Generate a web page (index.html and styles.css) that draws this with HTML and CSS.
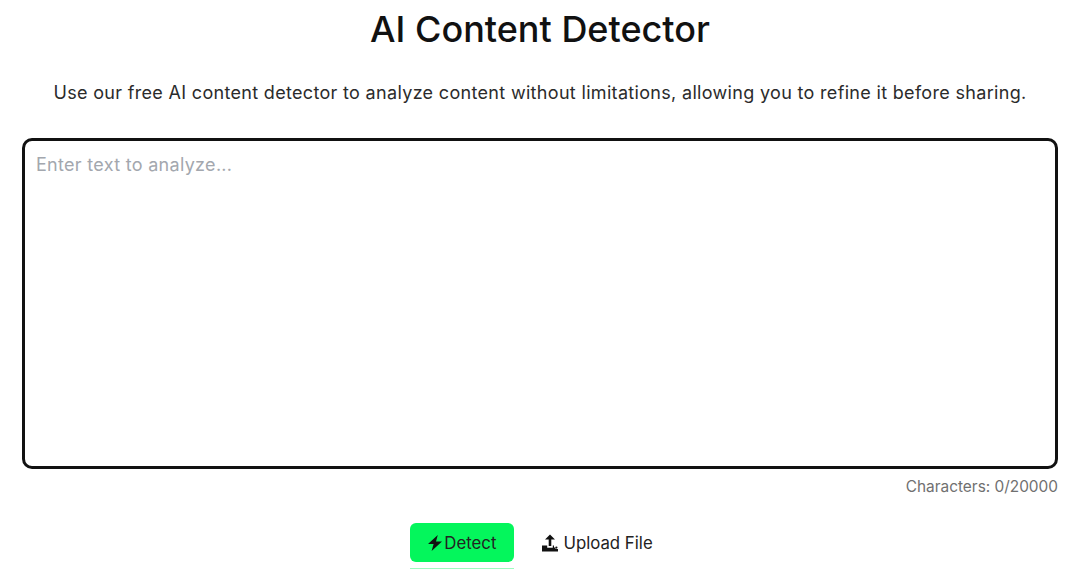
FILE: index.html
```html
<!DOCTYPE html>
<html lang="en">
<head>
    <meta charset="UTF-8">
    <meta name="viewport" content="width=device-width, initial-scale=1.0">
    <title>AI Content Detector</title>
    <link rel="stylesheet" href="styles.css">
</head>
<body>
    <main class="detector">
        <h1 class="title">AI Content Detector</h1>
        <p class="intro">Use our free AI content detector to analyze content without limitations, allowing you to refine it before sharing.</p>

        <textarea class="input" placeholder="Enter text to analyze..."></textarea>
        <div class="counter">Characters: 0/20000</div>

        <div class="actions">
            <button class="btn btn-detect">
                <svg class="icon" viewBox="0 0 16 16"><path d="M10.8 0 L1 9 H6.6 L4.6 16 L15 6.6 H9 Z"/></svg>
                Detect
            </button>
            <button class="btn btn-upload">
                <svg class="icon icon-upload" viewBox="0 0 18 18"><path d="M9 0.5 L14 5.6 H10.3 V12 H7.7 V5.6 H4 Z"/><path d="M1 11.5 H6.2 V13.8 H11.8 V11.5 H13 V13.4 H14.5 V15 H17 V17.4 H1 Z"/><circle cx="15.4" cy="13.6" r="1.1"/></svg>
                Upload File
            </button>
        </div>
        <div class="strip"></div>
    </main>
</body>
</html>
```

FILE: styles.css
```css
html, body {
    height: 100%;
    overflow: hidden;
}
body {
    margin: 0;
    background-color: #fff;
    font-family: Inter, sans-serif;
    color: #111;
}
.detector {
    display: flex;
    flex-direction: column;
    padding: 0 22px;
}
.title {
    margin: 8px 0 0;
    font-size: 36px;
    line-height: 42px;
    font-weight: 500;
    text-align: center;
    color: #111;
}
.intro {
    margin: 30px 0 0;
    font-size: 18px;
    line-height: 26px;
    letter-spacing: 0.32px;
    text-align: center;
    color: #2b2b2b;
}
.input {
    display: block;
    box-sizing: border-box;
    width: 100%;
    height: 331px;
    margin-top: 32px;
    padding: 11px 11px;
    border: 3px solid #111;
    border-radius: 10px;
    outline: none;
    resize: none;
    font-family: Inter, sans-serif;
    font-size: 18px;
    line-height: 26px;
    letter-spacing: 0.3px;
    color: #111;
}
.input::placeholder {
    color: #a3a7ae;
}
.counter {
    margin-top: 8px;
    font-size: 15.4px;
    line-height: 20px;
    text-align: right;
    color: #707070;
}
.actions {
    display: flex;
    justify-content: center;
    gap: 10px;
    margin-top: 26px;
}
.btn {
    display: flex;
    align-items: center;
    gap: 1px;
    height: 39px;
    padding: 0 18px 0 17px;
    border: none;
    border-radius: 6px;
    background: none;
    font-family: Inter, sans-serif;
    font-size: 16.8px;
    color: #222;
}
.btn-detect {
    background-color: #04f65c;
}
.btn-upload {
    gap: 4px;
    padding: 0 17px;
}
.icon {
    width: 16px;
    height: 16px;
    fill: #111;
}
.icon-upload {
    width: 18px;
    height: 18px;
}
.strip {
    width: 104px;
    height: 2px;
    margin: 6px 0 0 388px;
    background-color: #9dfcbf;
}
```
